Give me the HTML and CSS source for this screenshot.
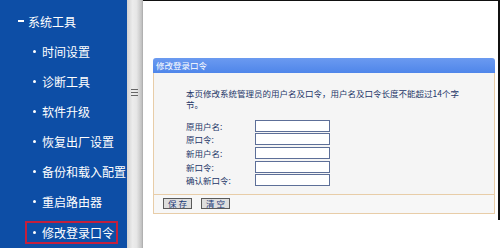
FILE: index.html
```html
<!DOCTYPE html>
<html lang="zh-CN">
<head>
<meta charset="utf-8">
<link rel="stylesheet" href="styles.css">
</head>
<body>
<nav class="sidebar">
  <div class="group"><span class="dash"></span><span>系统工具</span></div>
  <div class="item"><span class="dot"></span><span>时间设置</span></div>
  <div class="item"><span class="dot"></span><span>诊断工具</span></div>
  <div class="item"><span class="dot"></span><span>软件升级</span></div>
  <div class="item"><span class="dot"></span><span>恢复出厂设置</span></div>
  <div class="item"><span class="dot"></span><span>备份和载入配置</span></div>
  <div class="item"><span class="dot"></span><span>重启路由器</span></div>
  <div class="item"><span class="active"><span class="dot"></span><span>修改登录口令</span></span></div>
</nav>
<div class="divider">
  <svg class="grip" width="7" height="9" viewBox="0 0 7 9"><path d="M0 1.5H7M0 4.5H7M0 7.5H7" stroke="#666" stroke-width="1"/></svg>
</div>
<main class="main">
  <section class="panel">
    <div class="panel-head">修改登录口令</div>
    <div class="panel-body">
      <p class="desc">本页修改系统管理员的用户名及口令，用户名及口令长度不能超过14个字<br>节。</p>
      <div class="form">
        <label>原用户名:</label><span class="field"></span>
        <label>原口令:</label><span class="field"></span>
        <label>新用户名:</label><span class="field"></span>
        <label>新口令:</label><span class="field"></span>
        <label>确认新口令:</label><span class="field"></span>
      </div>
    </div>
    <div class="panel-foot">
      <button class="btn">保存</button>
      <button class="btn">清空</button>
    </div>
  </section>
</main>
</body>
</html>
```
FILE: styles.css
```css
html, body {
  margin: 0;
  padding: 0;
}
body {
  width: 500px;
  height: 248px;
  overflow: hidden;
  display: flex;
  align-items: flex-start;
  background: #fff;
  font-family: "Noto Sans CJK SC", "Noto Sans", sans-serif;
}
.sidebar {
  width: 127px;
  height: 248px;
  flex: none;
  background: #0d4ea6;
  color: #fff;
  font-size: 12px;
  box-sizing: border-box;
  padding-top: 6px;
}
.group, .item {
  height: 30px;
  display: flex;
  align-items: center;
}
.group { padding-left: 18px; }
.dash {
  width: 6px;
  height: 2px;
  background: #fff;
  margin-right: 4px;
}
.item { padding-left: 33px; }
.dot {
  width: 3px;
  height: 3px;
  border-radius: 50%;
  background: #fff;
  margin-right: 6px;
  flex: none;
}
.item:last-child { padding-left: 25px; }
.active {
  display: flex;
  align-items: center;
  box-sizing: border-box;
  width: 93px;
  height: 23px;
  margin-top: 3px;
  border: 2px solid #c41f3c;
  padding-left: 6px;
}
.divider {
  width: 16px;
  height: 248px;
  flex: none;
  background: linear-gradient(to right, #d2d2d2 0, #ececec 35%, #e6e6e6 60%, #c4c4c4 90%, #a8a8a8 100%);
  display: flex;
  justify-content: center;
  align-items: flex-start;
}
.grip {
  margin-top: 88px;
  margin-right: 2px;
}
.main {
  flex: 1;
  height: 220px;
  box-sizing: border-box;
  border-top: 1px solid #111;
  border-right: 2px solid #111;
  padding: 57px 3px 0 10px;
}
.panel {
  font-size: 8.5px;
  color: #243668;
}
.panel-head {
  height: 15px;
  line-height: 15px;
  background: linear-gradient(#6b9af0, #4f86ea);
  color: #fff;
  padding-left: 3px;
  border-radius: 3px 3px 0 0;
}
.panel-body {
  background: #f5f5f5;
  border-left: 1px solid #e8cda8;
  border-right: 1px solid #e8cda8;
  padding: 15px 0 7px 32px;
}
.desc {
  margin: 0;
  line-height: 10.5px;
}
.form {
  margin-top: 10px;
  display: grid;
  grid-template-columns: 69px 75px;
  grid-auto-rows: 13.6px;
  align-items: center;
}
.form label {
  line-height: 12px;
}
.field {
  height: 12px;
  box-sizing: border-box;
  border: 1px solid #5d6f98;
  background: #fff;
}
.panel-foot {
  height: 18px;
  background: #f7f7f7;
  border: 1px solid #e8cda8;
  display: flex;
  align-items: center;
  gap: 9px;
  padding-left: 9px;
}
.btn {
  width: 29px;
  height: 11px;
  padding: 0;
  margin: 0;
  border: 1px solid #5a5a5a;
  background: #dedede;
  color: #203a78;
  font-family: inherit;
  font-size: 8.5px;
  line-height: 9px;
  letter-spacing: 2px;
  text-indent: 2px;
}
```
